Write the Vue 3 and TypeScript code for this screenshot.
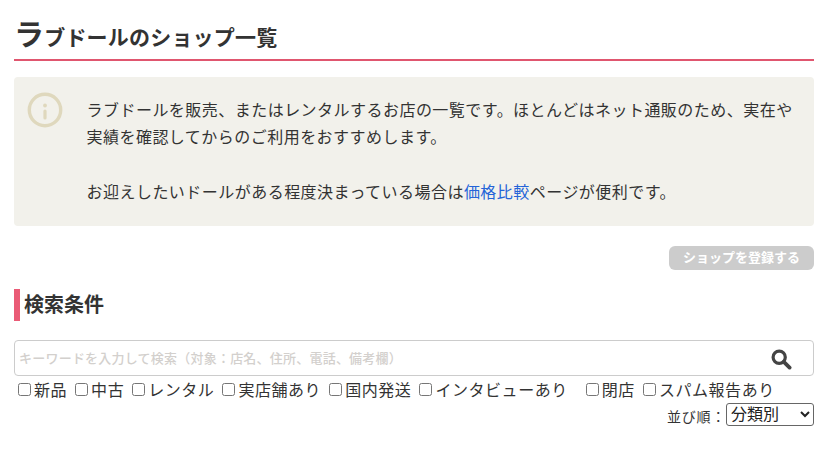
<script setup lang="ts">
const filters: { label: string; wide?: boolean }[] = [
  { label: '新品' }, { label: '中古' }, { label: 'レンタル' }, { label: '実店舗あり' },
  { label: '国内発送' }, { label: 'インタビューあり', wide: true }, { label: '閉店' }, { label: 'スパム報告あり' },
]
</script>

<template>
  <main class="page">
    <h1 class="title"><span class="first">ラ</span>ブドールのショップ一覧</h1>
    <section class="notice">
      <svg class="info" width="36" height="36" viewBox="0 0 36 36" aria-hidden="true">
        <circle cx="18" cy="18" r="15.7" fill="none" stroke="#dfd8bd" stroke-width="3.4" />
        <circle cx="18" cy="13.5" r="1.9" fill="#dfd8bd" />
        <rect x="16.4" y="17.5" width="3.2" height="10" rx="1.6" fill="#dfd8bd" />
      </svg>
      <div class="notice-text">
        <p>ラブドールを販売、またはレンタルするお店の一覧です。ほとんどはネット通販のため、実在や実績を確認してからのご利用をおすすめします。</p>
        <p class="gap">お迎えしたいドールがある程度決まっている場合は<a href="#">価格比較</a>ページが便利です。</p>
      </div>
    </section>
    <div class="actions"><button class="register" type="button">ショップを登録する</button></div>
    <h2 class="sub">検索条件</h2>
    <div class="search">
      <input class="keyword" type="text" placeholder="キーワードを入力して検索（対象：店名、住所、電話、備考欄）" />
      <svg class="glass" width="21" height="21" viewBox="0 0 21 21" aria-hidden="true">
        <circle cx="8.2" cy="8.2" r="6.1" fill="none" stroke="#444" stroke-width="3.2" />
        <path d="M12.8 12.8 L18.6 18.6" stroke="#444" stroke-width="3.8" stroke-linecap="round" />
      </svg>
    </div>
    <div class="filters">
      <label v-for="f in filters" :key="f.label" class="filter" :class="{ wide: f.wide }">
        <input type="checkbox" /><span>{{ f.label }}</span>
      </label>
    </div>
    <div class="sort">
      <span class="sort-label">並び順：</span>
      <select class="sort-select"><option>分類別</option></select>
    </div>
  </main>
</template>

<style scoped>
.page {
  box-sizing: border-box;
  width: 830px;
  padding: 0 16px 0 14px;
  font-family: "Noto Sans CJK JP", "Noto Sans", sans-serif;
  color: #333;
}
.title {
  margin: 0;
  height: 61px;
  box-sizing: border-box;
  padding: 12px 0 0;
  border-bottom: 2px solid #e0566f;
  font-size: 21px;
  line-height: 40px;
  font-weight: 700;
  letter-spacing: .2px;
  color: #333;
}
.first { font-size: 30px; }
.notice {
  display: flex;
  margin-top: 16px;
  height: 149px;
  box-sizing: border-box;
  padding: 15px 16px 0 13px;
  background: #f2f1eb;
  border-radius: 4px;
}
.info { flex: none; }
.notice-text {
  margin-left: 23.5px;
  font-size: 16px;
  line-height: 27.2px;
  letter-spacing: .47px;
  padding-top: 4px;
}
.notice-text p { margin: 0; }
.notice-text .gap { margin-top: 27.2px; }
.notice-text a { color: #2464d8; text-decoration: none; }
.actions { display: flex; justify-content: flex-end; margin-top: 20px; }
.register {
  width: 145px;
  height: 24px;
  padding: 0 0 2px;
  border: 0;
  border-radius: 6px;
  background: #ccc;
  color: #fff;
  font: 700 13px/22px "Noto Sans CJK JP", sans-serif;
}
.sub {
  margin: 19px 0 0;
  height: 32px;
  border-left: 6px solid #ea5b76;
  padding-left: 4px;
  font-size: 20px;
  line-height: 29px;
  font-weight: 700;
  color: #333;
}
.search { position: relative; margin-top: 19px; }
.keyword {
  display: block;
  box-sizing: border-box;
  width: 100%;
  height: 36px;
  padding: 0 4px 2px;
  border: 1px solid #ccc;
  border-radius: 4px;
  font: 500 13px "Noto Sans CJK JP", sans-serif;
  letter-spacing: .22px;
  outline: 0;
}
.keyword::placeholder { color: #d3d0cd; }
.glass { position: absolute; right: 22px; top: 9px; }
.filters {
  display: flex;
  margin-top: 2px;
  padding-left: 4px;
  font-size: 16px;
  line-height: 22px;
  letter-spacing: .55px;
}
.filter { display: flex; align-items: center; margin-right: 8px; white-space: nowrap; }
.filter.wide { margin-right: 18px; }
.filter input { margin: 0 3px 0 0; width: 13px; height: 13px; }
.sort {
  display: flex;
  justify-content: flex-end;
  align-items: flex-start;
  margin-top: 3px;
  font-size: 14px;
  line-height: 24px;
  letter-spacing: .75px;
}
.sort-label { padding-top: 1px; }
.sort-select {
  width: 88px;
  height: 23px;
  padding: 0;
  font: 16px "Liberation Sans", "Noto Sans CJK JP", sans-serif;
  color: #222;
  background: #fff;
  border: 1px solid #666;
  border-radius: 3px;
}
</style>
